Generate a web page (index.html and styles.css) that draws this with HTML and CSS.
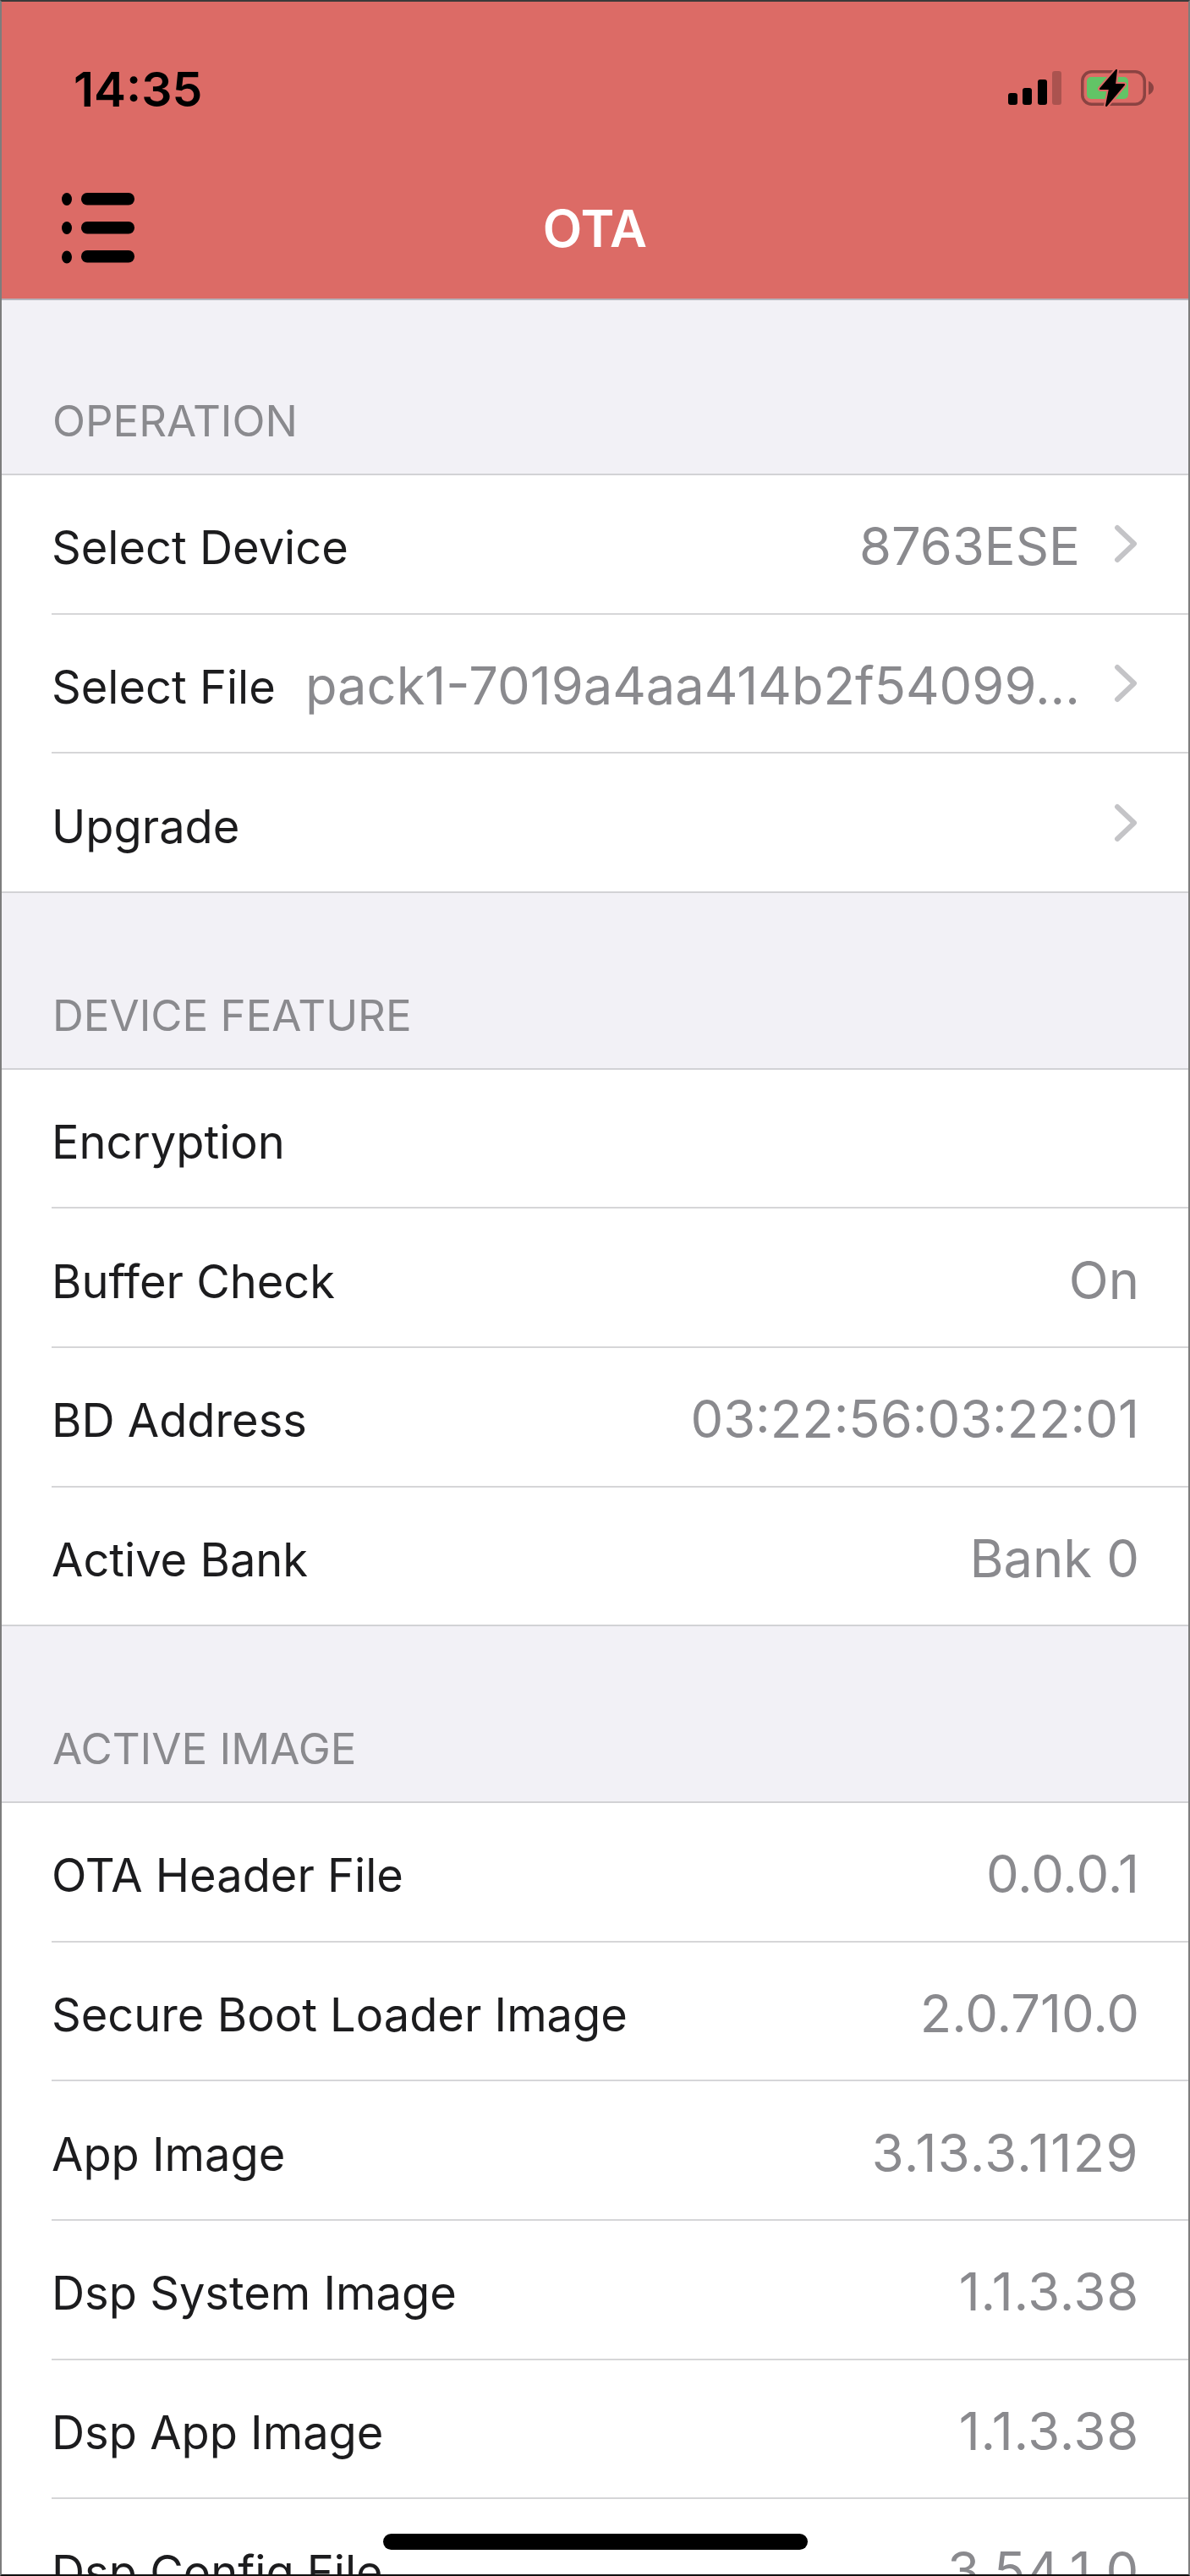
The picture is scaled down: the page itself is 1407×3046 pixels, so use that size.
FILE: index.html
```html
<!DOCTYPE html>
<html lang="en">
<head>
<meta charset="utf-8">
<title>OTA</title>
<link rel="stylesheet" href="styles.css">
</head>
<body>
<div class="screen">
  <header class="nav">
    <div class="status">
      <span class="time">14:35</span>
      <div class="status-icons">
        <svg class="signal" width="63" height="40" viewBox="0 0 63 40">
          <rect x="0" y="26" width="11" height="14" rx="3"/>
          <rect x="17" y="20" width="11" height="20" rx="3"/>
          <rect x="35" y="10" width="11" height="30" rx="3"/>
          <rect class="off" x="52" y="0" width="11" height="40" rx="3"/>
        </svg>
        <svg class="battery" width="88" height="44" viewBox="0 0 88 44">
          <rect class="batt-shell" x="3.750" y="1.750" width="73.500" height="38.500" rx="11"/>
          <path class="batt-nub" d="M82 13c3 1 6 4 6 8s-3 7-6 8z"/>
          <rect class="batt-fill" x="9" y="8" width="49" height="26" rx="5"/>
          <path class="bolt-gap" d="M44 0 L25 22 L36 22 L32 42 L53 17 L42 17 Z"/>
          <path class="bolt" d="M44 0 L25 22 L36 22 L32 42 L53 17 L42 17 Z"/>
        </svg>
      </div>
    </div>
    <div class="titlebar">
      <svg class="menu" width="86" height="84" viewBox="0 0 86 84">
        <ellipse cx="6" cy="7.500" rx="6" ry="7.500"/>
        <ellipse cx="6" cy="41.500" rx="6" ry="7.500"/>
        <ellipse cx="6" cy="76" rx="6" ry="7.500"/>
        <rect x="23" y="0" width="63" height="14.500" rx="7"/>
        <rect x="23" y="34" width="63" height="14.500" rx="7"/>
        <rect x="23" y="68" width="63" height="14.500" rx="7"/>
      </svg>
      <h1 class="title">OTA</h1>
    </div>
  </header>

  <main>
    <section>
      <h2 class="section-head first">OPERATION</h2>
      <div class="group">
        <div class="row"><span class="label">Select Device</span><span class="value">8763ESE</span><svg class="chev" width="28" height="46" viewBox="0 0 28 46"><path d="M4 4 L24 23 L4 42"/></svg></div>
        <div class="row"><span class="label">Select File</span><span class="value">pack1-7019a4aa414b2f54099...</span><svg class="chev" width="28" height="46" viewBox="0 0 28 46"><path d="M4 4 L24 23 L4 42"/></svg></div>
        <div class="row last"><span class="label">Upgrade</span><svg class="chev" width="28" height="46" viewBox="0 0 28 46"><path d="M4 4 L24 23 L4 42"/></svg></div>
      </div>
    </section>
    <section>
      <h2 class="section-head">DEVICE FEATURE</h2>
      <div class="group">
        <div class="row"><span class="label">Encryption</span></div>
        <div class="row"><span class="label">Buffer Check</span><span class="value flush">On</span></div>
        <div class="row"><span class="label">BD Address</span><span class="value flush">03:22:56:03:22:01</span></div>
        <div class="row last"><span class="label">Active Bank</span><span class="value flush">Bank 0</span></div>
      </div>
    </section>
    <section>
      <h2 class="section-head">ACTIVE IMAGE</h2>
      <div class="group">
        <div class="row"><span class="label">OTA Header File</span><span class="value flush">0.0.0.1</span></div>
        <div class="row"><span class="label">Secure Boot Loader Image</span><span class="value flush">2.0.710.0</span></div>
        <div class="row"><span class="label">App Image</span><span class="value flush spread-wide">3.13.3.1129</span></div>
        <div class="row"><span class="label">Dsp System Image</span><span class="value flush spread">1.1.3.38</span></div>
        <div class="row"><span class="label">Dsp App Image</span><span class="value flush spread">1.1.3.38</span></div>
        <div class="row"><span class="label">Dsp Config File</span><span class="value flush spread">3.54.1.0</span></div>
      </div>
    </section>
  </main>
  <div class="home-bar"></div>
</div>
</body>
</html>
```
FILE: styles.css
```css
* { box-sizing: border-box; }
html, body { margin: 0; padding: 0; }
body { background: #fff; font-family: Inter, "Noto Sans", sans-serif; }

.screen {
  position: relative;
  width: 1407px;
  height: 3046px;
  overflow: hidden;
  background: #f2f1f6;
  border-top: 2px solid #3a3a3a;
  border-left: 2px solid #7d7d7d;
  border-right: 2px solid #7d7d7d;
  border-bottom: 2px solid #111;
}

.nav {
  height: 353px;
  background: #dc6b66;
  border-bottom: 2px solid #b4b3bb;
}
.status {
  display: flex;
  justify-content: space-between;
  padding: 70px 41px 0 85px;
  height: 224px;
}
.time {
  font-size: 57px;
  font-weight: 600;
  line-height: 68px;
  color: #000;
}
.status-icons {
  display: flex;
  align-items: flex-start;
  gap: 21px;
  padding-top: 11px;
}
.signal { margin-top: 1px; fill: #000; }
.signal .off { opacity: .22; }
.battery { overflow: visible; }
.batt-shell { fill: none; stroke: #8b4342; stroke-width: 3.500; }
.batt-nub { fill: #8b4342; }
.batt-fill { fill: #62c466; }
.bolt-gap { fill: #dc6b66; stroke: #dc6b66; stroke-width: 6; stroke-linejoin: round; }
.bolt { fill: #000; stroke: #000; stroke-width: 2; stroke-linejoin: round; }

.titlebar {
  position: relative;
  display: flex;
  align-items: flex-start;
  padding-left: 71px;
}
.menu { fill: #000; margin-top: 2px; }
.title {
  position: absolute;
  left: 0;
  right: 0;
  top: 8px;
  margin: 0;
  text-align: center;
  font-size: 60.500px;
  line-height: 72px;
  font-weight: 600;
  color: #fff;
}

.section-head {
  display: flex;
  align-items: flex-end;
  height: 208.500px;
  margin: 0;
  padding: 0 0 32px 60px;
  font-size: 51px;
  line-height: 60px;
  font-weight: 400;
  color: #8a8a8e;
  border-bottom: 2px solid #d2d2d5;
}
.section-head.first { height: 207px; }

.group {
  background: #fff;
  border-bottom: 2px solid #d2d2d5;
}
.row {
  display: flex;
  align-items: center;
  height: 164.700px;
  margin-left: 59px;
  padding-right: 60px;
  border-bottom: 2px solid #d6d6d8;
  white-space: nowrap;
}
.row.last { border-bottom: 0; height: 162.700px; }

.label {
  padding-top: 8px;
  font-size: 54.200px;
  line-height: 66px;
  color: #1c1c1e;
  flex: none;
}
.value {
  margin-left: auto;
  padding-top: 6px;
  font-size: 61.400px;
  line-height: 72px;
  color: #8a8a8e;
}
.value.flush { margin-right: -2px; }
.value.spread { letter-spacing: .8px; }
.value.spread-wide { letter-spacing: 1.400px; }
.chev {
  flex: none;
  margin-left: 40px;
  fill: none;
  stroke: #c4c4c7;
  stroke-width: 6;
  stroke-linecap: round;
  stroke-linejoin: round;
}
.row.last .chev { margin-left: auto; }

.home-bar {
  position: absolute;
  left: 451px;
  top: 2994px;
  width: 502px;
  height: 19px;
  border-radius: 10px;
  background: #000;
}
```
